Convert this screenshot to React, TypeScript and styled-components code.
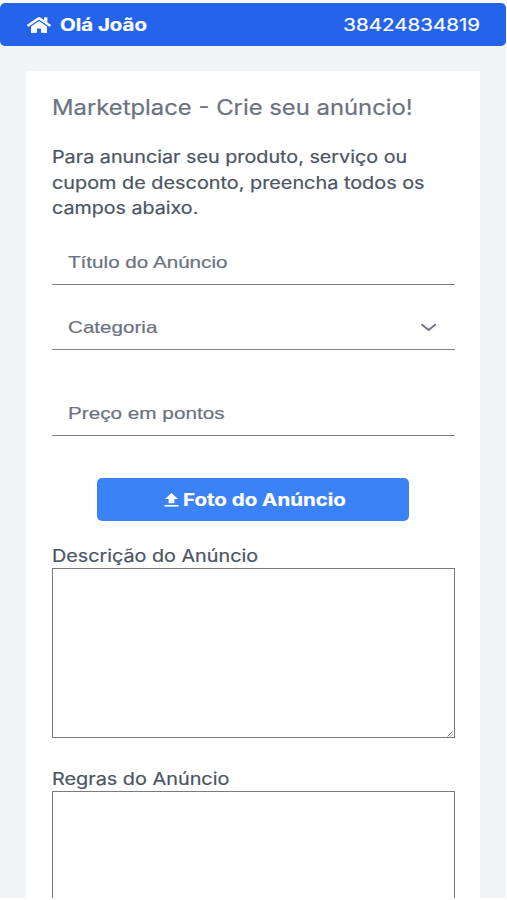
import React from 'react';
import styled, { createGlobalStyle } from 'styled-components';

const GlobalStyle = createGlobalStyle`
  *, *::before, *::after { box-sizing: border-box; }
  body {
    margin: 0;
    background: #fff;
    overflow: hidden;
    font-family: Inter, "Liberation Sans", sans-serif;
  }
`;

const Page = styled.div`
  width: 506px;
  height: 895px;
  margin-top: 3px;
  overflow: hidden;
  background: #f3f4f6;
`;

const HeaderWrap = styled.div`
  background: linear-gradient(#fff 50%, #f3f4f6 50%);
`;

const Header = styled.header`
  display: flex;
  align-items: center;
  justify-content: space-between;
  height: 42.5px;
  padding: 1px 26px 0 27px;
  border-radius: 5px;
  background: #2563eb;
  color: #fff;
  font-size: 17px;
  line-height: 26px;
`;

const Home = styled.div`
  display: flex;
  align-items: center;
  gap: 9px;
  font-weight: 700;
`;

/* Text set wider than the font's natural width. */
const Wide = styled.span<{ $x: number; $origin?: string }>`
  display: inline-block;
  white-space: nowrap;
  transform: scaleX(${(p) => p.$x});
  transform-origin: ${(p) => p.$origin ?? 'left'} center;
  -webkit-text-stroke: 0.2px currentColor;
`;

const Card = styled.main`
  width: 454px;
  height: 840px;
  margin: 25.5px 0 0 26px;
  padding: 24px 26px 0;
  border-radius: 2px;
  background: #fff;
  color: #4b5563;
`;

const Title = styled.h1`
  margin: 0;
  font-size: 21px;
  font-weight: 400;
  line-height: 26px;
  color: #6b7280;
`;

const Intro = styled.p`
  display: flex;
  flex-direction: column;
  align-items: flex-start;
  margin: 24px 0 0;
  font-size: 17px;
  line-height: 25.5px;
`;

const Field = styled.div<{ $gap: number }>`
  display: flex;
  align-items: center;
  justify-content: space-between;
  width: 403px;
  height: 45px;
  margin-top: ${(p) => p.$gap}px;
  padding: 2px 18px 0 16px;
  border-bottom: 1px solid #7c7f86;
  font-family: "Liberation Sans", sans-serif;
  font-size: 17px;
  line-height: 24px;
  color: #6b7280;
`;

const UploadButton = styled.button`
  display: flex;
  align-items: center;
  width: 312px;
  height: 43px;
  margin: 42px 0 0 45px;
  padding: 2px 0 0 66px;
  gap: 3px;
  border: 0;
  border-radius: 5px;
  background: #3b82f6;
  color: #fff;
  font: 700 17px/26px Inter, sans-serif;
`;

const Label = styled.label<{ $gap: number }>`
  display: block;
  height: 25px;
  margin-top: ${(p) => p.$gap}px;
  font-size: 17px;
  line-height: 27px;
`;

const AreaBox = styled.div`
  position: relative;
  width: 403px;
  height: 170px;
`;

const Area = styled.textarea`
  display: block;
  width: 100%;
  height: 100%;
  padding: 8px;
  resize: none;
  border: 1px solid #777a7e;
  border-radius: 0;
  background: #fff;
  outline: 0;
`;

const Grip = styled.svg`
  position: absolute;
  right: 2px;
  bottom: 1px;
`;

const HomeIcon = () => (
  <svg width="24" height="18" viewBox="0 0 576 512" preserveAspectRatio="none" fill="currentColor">
    <path d="M280.37 148.26L96 300.11V464a16 16 0 0 0 16 16l112.06-.29a16 16 0 0 0 15.92-16V368a16 16 0 0 1 16-16h64a16 16 0 0 1 16 16v95.64a16 16 0 0 0 16 16.05L464 480a16 16 0 0 0 16-16V300L295.67 148.26a12.19 12.19 0 0 0-15.3 0zM571.6 251.47L488 182.56V44.05a12 12 0 0 0-12-12h-56a12 12 0 0 0-12 12v72.61L318.47 43a48 48 0 0 0-61 0L4.34 251.47a12 12 0 0 0-1.6 16.9l25.5 31A12 12 0 0 0 45.15 301l235.22-193.74a12.19 12.19 0 0 1 15.3 0L530.9 301a12 12 0 0 0 16.9-1.6l25.5-31a12 12 0 0 0-1.7-16.93z" />
  </svg>
);

const UploadIcon = () => (
  <svg width="17" height="14" viewBox="0 0 17 14" fill="currentColor">
    <path d="M8.5 0 15 6H11.4V10.3H5.6V6H2Z" />
    <path d="M1.5 12H15.5V13.6H1.5Z" />
  </svg>
);

const Chevron = () => (
  <svg width="17" height="9" viewBox="0 0 17 9" fill="none" stroke="#6b7280" strokeWidth="1.8" strokeLinecap="round" strokeLinejoin="round">
    <path d="M2 1.7 8.6 7 15.2 1.7" />
  </svg>
);

interface TextSectionProps {
  id: string;
  label: string;
  stretch: number;
  gap: number;
}

const TextSection = ({ id, label, stretch, gap }: TextSectionProps) => (
  <>
    <Label htmlFor={id} $gap={gap}><Wide $x={stretch}>{label}</Wide></Label>
    <AreaBox>
      <Area id={id} />
      <Grip width="6" height="6" viewBox="0 0 6 6" stroke="#777" strokeWidth="0.9">
        <path d="M0.5 5.5 5.5 0.5M3.2 5.5 5.5 3.2" />
      </Grip>
    </AreaBox>
  </>
);

export default function App() {
  return (
    <>
      <GlobalStyle />
      <Page>
        <HeaderWrap>
          <Header>
            <Home>
              <HomeIcon />
              <Wide $x={1.2}>Olá João</Wide>
            </Home>
            <Wide $x={1.21} $origin="right">38424834819</Wide>
          </Header>
        </HeaderWrap>
        <Card>
          <Title><Wide $x={1.135}>Marketplace - Crie seu anúncio!</Wide></Title>
          <Intro>
            <Wide $x={1.162}>Para anunciar seu produto, serviço ou</Wide>
            <Wide $x={1.167}>cupom de desconto, preencha todos os</Wide>
            <Wide $x={1.157}>campos abaixo.</Wide>
          </Intro>
          <Field $gap={18}><Wide $x={1.214}>Título do Anúncio</Wide></Field>
          <Field $gap={20}><Wide $x={1.212}>Categoria</Wide><Chevron /></Field>
          <Field $gap={41}><Wide $x={1.218}>Preço em pontos</Wide></Field>
          <UploadButton type="button">
            <UploadIcon />
            <Wide $x={1.206}>Foto do Anúncio</Wide>
          </UploadButton>
          <TextSection id="descricao" label="Descrição do Anúncio" stretch={1.162} gap={22} />
          <TextSection id="regras" label="Regras do Anúncio" stretch={1.167} gap={28} />
        </Card>
      </Page>
    </>
  );
}
